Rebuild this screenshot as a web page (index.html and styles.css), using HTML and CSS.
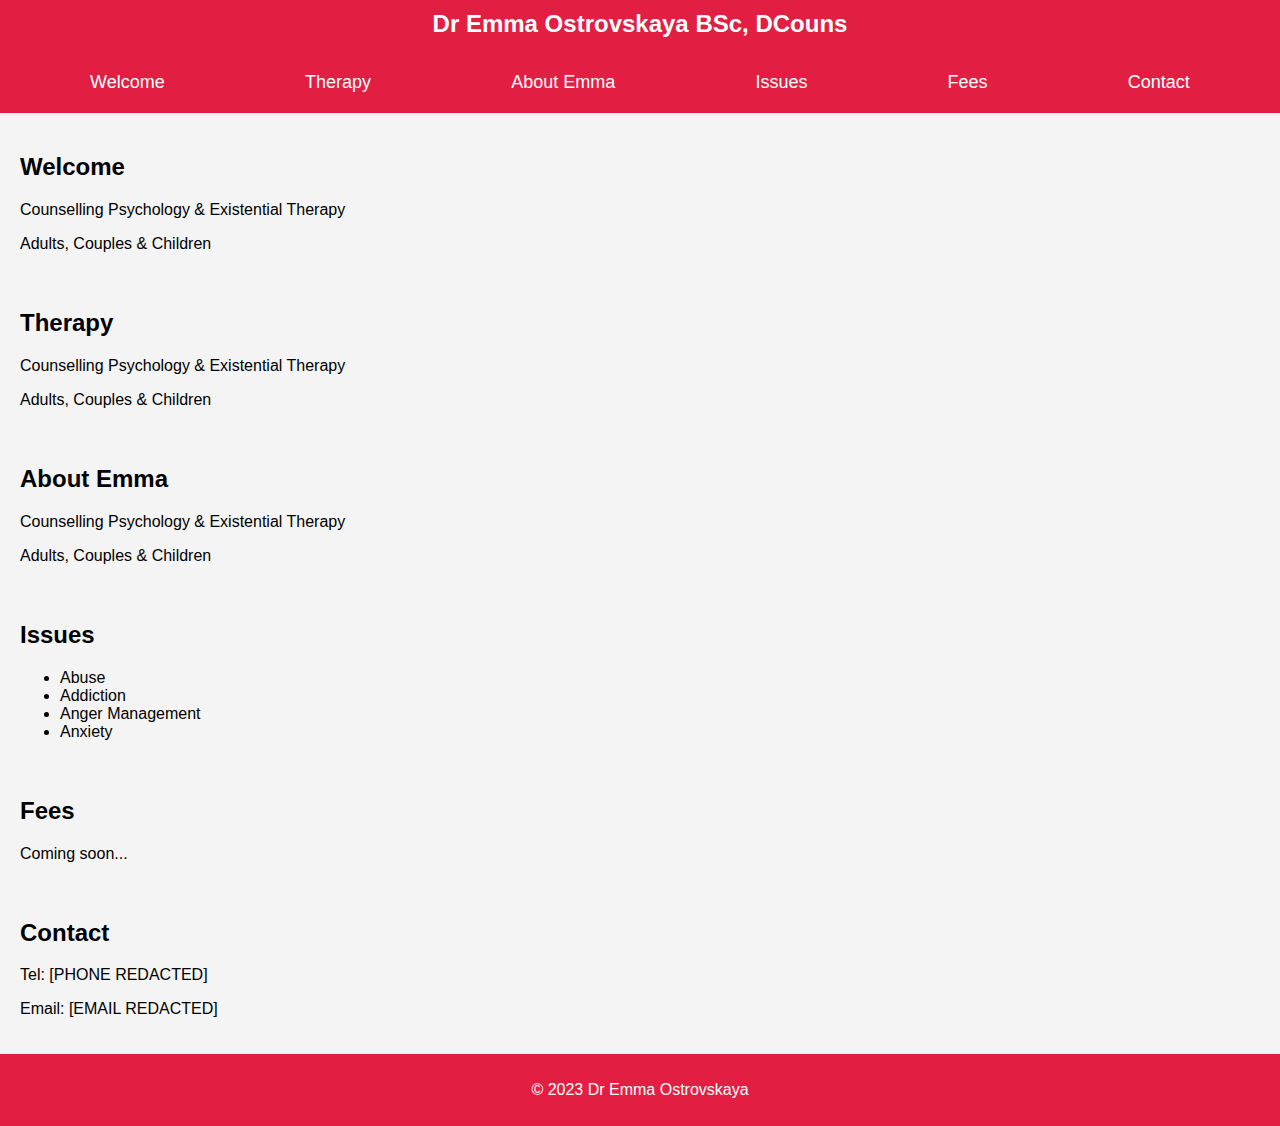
FILE: index.html
```html
<!DOCTYPE html>
<html lang="en">
<head>
<meta charset="utf-8">
<title>Dr Emma Ostrovskaya</title>
<link rel="stylesheet" href="styles.css">
</head>
<body>
<header class="site-header">
  <h1 class="site-title">Dr Emma Ostrovskaya BSc, DCouns</h1>
  <nav class="site-nav">
    <a href="#welcome">Welcome</a>
    <a href="#therapy">Therapy</a>
    <a href="#about">About Emma</a>
    <a href="#issues">Issues</a>
    <a href="#fees">Fees</a>
    <a href="#contact">Contact</a>
  </nav>
</header>
<main class="content">
  <section class="section" id="welcome">
    <h2>Welcome</h2>
    <p>Counselling Psychology &amp; Existential Therapy</p>
    <p>Adults, Couples &amp; Children</p>
  </section>
  <section class="section" id="therapy">
    <h2>Therapy</h2>
    <p>Counselling Psychology &amp; Existential Therapy</p>
    <p>Adults, Couples &amp; Children</p>
  </section>
  <section class="section" id="about">
    <h2>About Emma</h2>
    <p>Counselling Psychology &amp; Existential Therapy</p>
    <p>Adults, Couples &amp; Children</p>
  </section>
  <section class="section" id="issues">
    <h2>Issues</h2>
    <ul>
      <li>Abuse</li>
      <li>Addiction</li>
      <li>Anger Management</li>
      <li>Anxiety</li>
    </ul>
  </section>
  <section class="section" id="fees">
    <h2>Fees</h2>
    <p>Coming soon...</p>
  </section>
  <section class="section" id="contact">
    <h2>Contact</h2>
    <p>Tel: [PHONE REDACTED]</p>
    <p>Email: [EMAIL REDACTED]</p>
  </section>
</main>
<footer class="site-footer">
  <p>&copy; 2023 Dr Emma Ostrovskaya</p>
</footer>
</body>
</html>
```

FILE: styles.css
```css
html, body {
  margin: 0;
  padding: 0;
}
body {
  font-family: "Liberation Sans", Arial, sans-serif;
  font-size: 16px;
  background: #f4f4f4;
  color: #000;
}
.site-header {
  background: #e21f43;
  color: #fff;
  padding: 10px 20px 0;
}
.site-title {
  margin: 0;
  font-size: 24px;
  font-weight: bold;
  text-align: center;
}
.site-nav {
  display: flex;
  justify-content: space-around;
  margin-top: 14px;
}
.site-nav a {
  color: #fff;
  text-decoration: none;
  font-size: 18px;
  padding: 20px 0;
}
.content {
  padding-top: 20px;
}
.section {
  padding: 20px;
}
.section h2 {
  margin: 0 0 0.83em;
  font-size: 24px;
}
.section p {
  margin: 16px 0;
}
.section ul {
  margin: 16px 0;
  padding-left: 40px;
}
.site-footer {
  background: #e21f43;
  color: #fff;
  text-align: center;
  padding: 27px 0;
}
.site-footer p {
  margin: 0;
}
```
